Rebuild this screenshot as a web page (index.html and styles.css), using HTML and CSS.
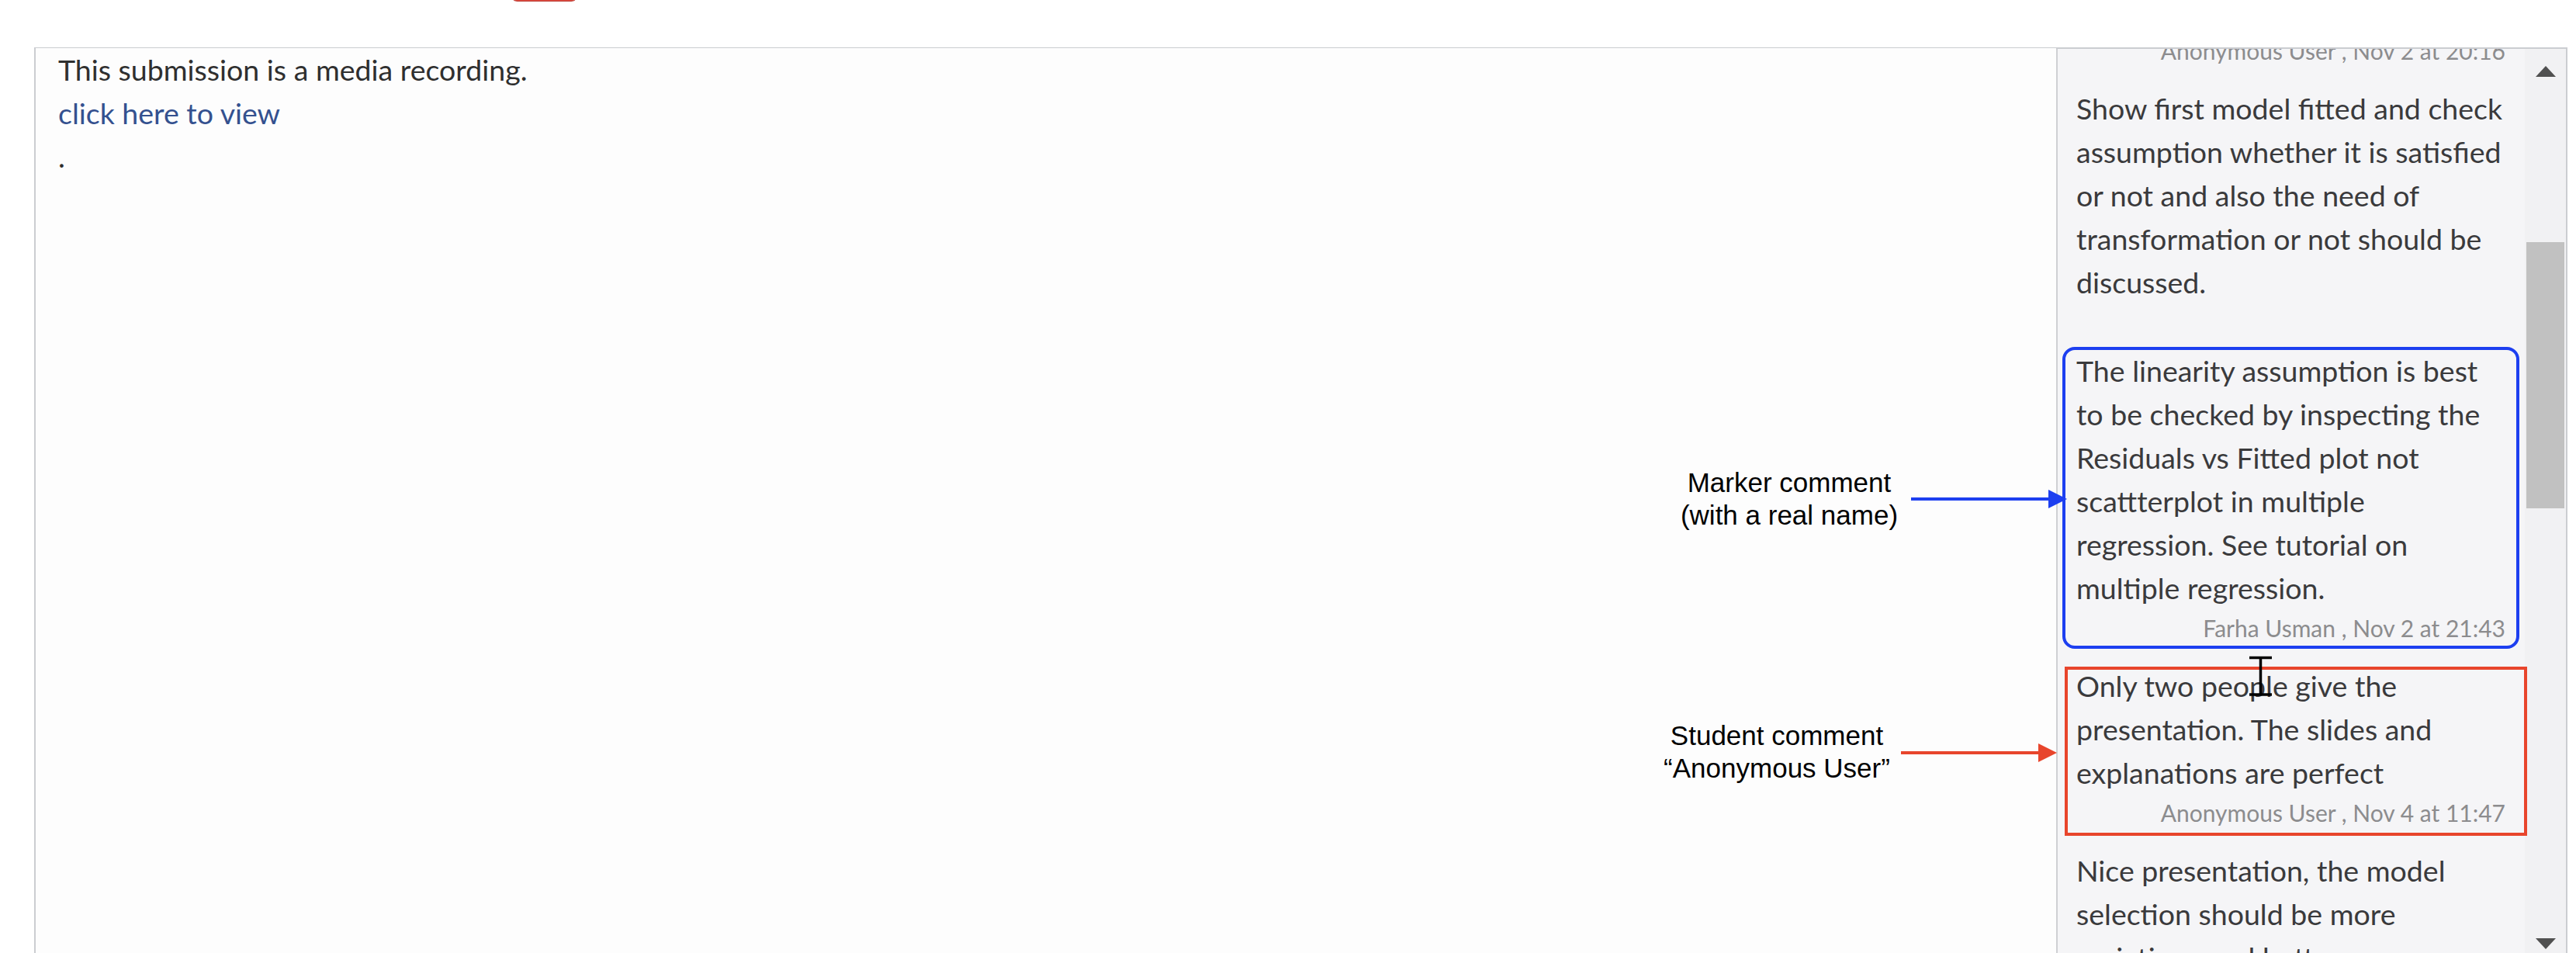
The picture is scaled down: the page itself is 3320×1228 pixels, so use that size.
FILE: index.html
```html
<!DOCTYPE html>
<html lang="en">
<head>
<meta charset="utf-8">
<title>Submission comments</title>
<link rel="stylesheet" href="styles.css">
</head>
<body>
<div class="topbar"><span class="pill"></span></div>
<div class="panel">
  <div class="main">
    <p class="line">This submission is a media recording.</p>
    <a class="line link" href="#">click here to view</a>
    <p class="line">.</p>
  </div>
  <aside class="sidebar">
    <div class="comments">
      <div class="comment">
        <div class="meta">Anonymous User , Nov 2 at 20:16</div>
      </div>
      <div class="comment">
        <div class="text">Show first model fitted and check<br>assumption whether it is satisfied<br>or not and also the need of<br>transformation or not should be<br>discussed.</div>
        <div class="meta meta-empty"></div>
      </div>
      <div class="comment">
        <div class="text">The linearity assumption is best<br>to be checked by inspecting the<br>Residuals vs Fitted plot not<br>scattterplot in multiple<br>regression. See tutorial on<br>multiple regression.</div>
        <div class="meta">Farha Usman , Nov 2 at 21:43</div>
        <span class="mark mark-blue"></span>
      </div>
      <div class="comment">
        <div class="text">Only two people give the<br>presentation. The slides and<br>explanations are perfect</div>
        <div class="meta">Anonymous User , Nov 4 at 11:47</div>
        <span class="mark mark-red"></span>
      </div>
      <div class="comment">
        <div class="text">Nice presentation, the model<br>selection should be more<br>variations and better</div>
      </div>
    </div>
    <div class="scrollbar">
      <span class="arrow arrow-up"></span>
      <span class="thumb"></span>
      <span class="arrow arrow-down"></span>
    </div>
  </aside>
</div>

<div class="note note-marker">Marker comment<br>(with a real name)</div>
<div class="note note-student">Student comment<br>“Anonymous User”</div>

<svg class="overlay" width="3320" height="1228" viewBox="0 0 3320 1228" aria-hidden="true">
  <line x1="2463" y1="643" x2="2643" y2="643" stroke="#1d3ff0" stroke-width="4"/>
  <polygon points="2640,631 2664,643 2640,655" fill="#1d3ff0"/>
  <line x1="2450" y1="970" x2="2630" y2="970" stroke="#e8452c" stroke-width="4"/>
  <polygon points="2627,958 2651,970 2627,982" fill="#e8452c"/>
  <g stroke="#000" stroke-width="3.5" fill="none">
    <line x1="2899" y1="847.5" x2="2928" y2="847.5"/>
    <line x1="2913.5" y1="847" x2="2913.5" y2="895"/>
    <line x1="2899" y1="895" x2="2928" y2="895"/>
  </g>
</svg>
</body>
</html>
```

FILE: styles.css
```css
html, body {
  margin: 0;
  padding: 0;
  background: #ffffff;
  overflow: hidden;
}

body {
  position: relative;
  width: 3320px;
  height: 1228px;
  font-family: Lato, "Open Sans", "Liberation Sans", sans-serif;
}

.topbar {
  height: 61px;
  overflow: hidden;
}

.pill {
  display: block;
  margin-left: 657px;
  margin-top: -30px;
  width: 89px;
  height: 32px;
  box-sizing: border-box;
  border-radius: 10px;
  background: #e04a3f;
  border: 1px solid #b8372e;
}

.panel {
  display: flex;
  margin-left: 44px;
  margin-right: 11px;
  height: 1171px;
  box-sizing: border-box;
  border: 2px solid #cbcdd1;
  border-bottom: none;
}

.main {
  flex: 1;
  background: #fdfdfd;
  padding-left: 29px;
  margin-top: -1px;
  font-size: 37.5px;
  line-height: 56px;
  color: #2f2f2f;
}

.line {
  display: block;
  margin: 0;
  white-space: nowrap;
}

.link {
  color: #34518f;
  text-decoration: none;
}

.sidebar {
  width: 657px;
  flex: none;
  display: flex;
  box-sizing: border-box;
  border-left: 2px solid #cfd0d4;
  background: #f5f5f7;
  overflow: hidden;
}

.comments {
  flex: 1;
  padding: 0 25px 0 24px;
  margin-top: -18px;
}

.comment {
  position: relative;
  margin-bottom: 27px;
}

.text {
  font-size: 37.5px;
  line-height: 56px;
  color: #3a3a3c;
  white-space: nowrap;
}

.meta {
  margin-top: 3px;
  font-size: 30px;
  line-height: 40px;
  height: 40px;
  text-align: right;
  color: #8c8c8e;
  white-space: nowrap;
}

.comment:first-child .meta {
  margin-top: 0;
}

.meta-empty {
  height: 28px;
}

.mark {
  position: absolute;
  box-sizing: border-box;
  pointer-events: none;
}

.mark-blue {
  top: -3px;
  bottom: -7px;
  left: -18px;
  right: -18px;
  border: 4px solid #1d3ff0;
  border-radius: 16px;
}

.mark-red {
  top: 3px;
  bottom: -10px;
  left: -15px;
  right: -28px;
  border: 4px solid #e8452c;
}

.scrollbar {
  width: 53px;
  flex: none;
  display: flex;
  flex-direction: column;
  align-items: center;
  background: #f1f1f3;
}

.arrow {
  width: 0;
  height: 0;
  border-left: 13px solid transparent;
  border-right: 13px solid transparent;
}

.arrow-up {
  margin-top: 22px;
  border-bottom: 14px solid #505050;
}

.arrow-down {
  margin-top: auto;
  margin-bottom: 9px;
  border-top: 14px solid #505050;
}

.thumb {
  align-self: stretch;
  margin: 213px 2px 0;
  height: 343px;
  background: #c1c1c1;
}

.note {
  position: absolute;
  width: 400px;
  font-family: "Liberation Sans", Arial, sans-serif;
  font-size: 35px;
  line-height: 42px;
  color: #000000;
  text-align: center;
  white-space: nowrap;
}

.note-marker {
  left: 2106px;
  top: 601px;
}

.note-student {
  left: 2090px;
  top: 927px;
}

.overlay {
  position: absolute;
  left: 0;
  top: 0;
  pointer-events: none;
}
```
